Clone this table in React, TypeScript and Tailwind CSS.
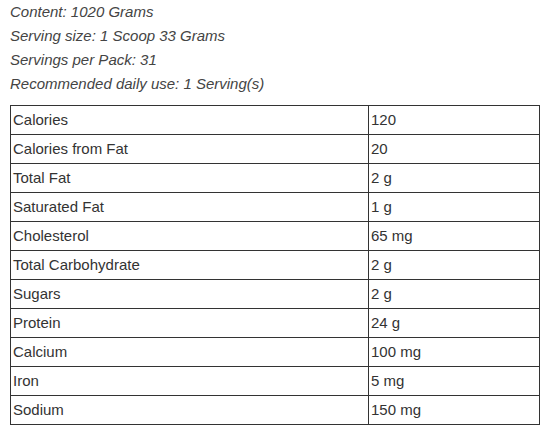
const rows: [string, string][] = [
  ["Calories", "120"],
  ["Calories from Fat", "20"],
  ["Total Fat", "2 g"],
  ["Saturated Fat", "1 g"],
  ["Cholesterol", "65 mg"],
  ["Total Carbohydrate", "2 g"],
  ["Sugars", "2 g"],
  ["Protein", "24 g"],
  ["Calcium", "100 mg"],
  ["Iron", "5 mg"],
  ["Sodium", "150 mg"],
];

const info = [
  "Content: 1020 Grams",
  "Serving size: 1 Scoop 33 Grams",
  "Servings per Pack: 31",
  "Recommended daily use: 1 Serving(s)",
];

export default function App() {
  return (
    <div className="min-h-screen bg-white pl-[10px] font-['Liberation_Sans',Arial,sans-serif] text-[15px] text-[#333]">
      <div className="italic text-[#444]">
        {info.map((line) => (
          <p key={line} className="leading-[24px]">
            {line}
          </p>
        ))}
      </div>
      <table className="mt-[9px] w-[530px] border-collapse border border-[#333]">
        <tbody>
          {rows.map(([name, value]) => (
            <tr key={name} className="h-[29px]">
              <td className="w-[358px] border border-[#333] px-[2px] align-middle">{name}</td>
              <td className="border border-[#333] px-[2px] align-middle">{value}</td>
            </tr>
          ))}
        </tbody>
      </table>
    </div>
  );
}
